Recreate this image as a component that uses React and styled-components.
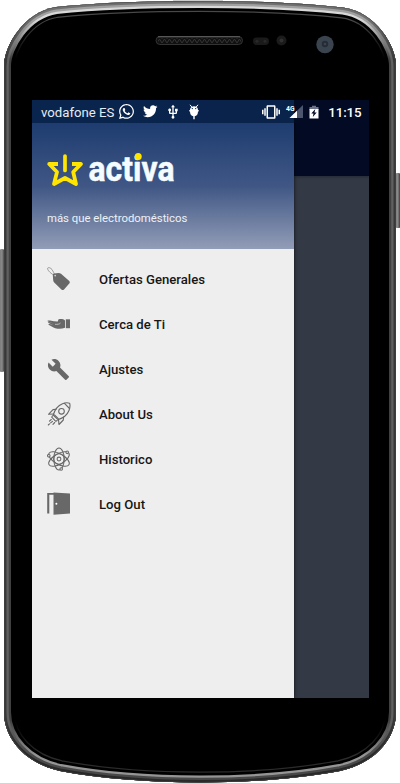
import React from 'react';
import styled, { createGlobalStyle } from 'styled-components';
import { FaWhatsapp, FaTwitter } from 'react-icons/fa';
import { MdUsb, MdBuild, MdVibration } from 'react-icons/md';

const GlobalStyle = createGlobalStyle`
  * { box-sizing: border-box; }
  body { margin: 0; background: #fff; font-family: Roboto, "Liberation Sans", sans-serif; overflow: hidden; }
`;

const Phone = styled.main`
  position: relative;
  width: 400px;
  height: 783px;
  padding: 100px 32px 0;
`;
const FrameArt = styled.svg`
  position: absolute;
  inset: 0;
`;
const Screen = styled.div`
  position: relative;
  width: 336.5px;
  height: 597.5px;
  display: grid;
  grid-template-columns: 262px 1fr;
  background: #333945;
  overflow: hidden;
`;
const Drawer = styled.aside`
  display: flex;
  flex-direction: column;
  background: #eee;
  box-shadow: 0 0 4px rgba(0, 0, 0, 0.7);
  z-index: 1;
`;
const Header = styled.header`
  height: 149px;
  padding: 50px 15px 0;
  background: linear-gradient(#1e3c70 15%, #405785 58%, #929db7);
  color: #fff;
`;
const Brand = styled.svg`
  display: block;
  width: 132px;
  height: 40px;
  overflow: visible;
`;
const Tagline = styled.p`
  margin: 21px 0 0;
  font-size: 11.35px;
  line-height: 15px;
  white-space: nowrap;
  color: #eef1f6;
`;
const Menu = styled.nav`
  display: flex;
  flex-direction: column;
  padding-top: 8px;
`;
const MenuItem = styled.a`
  display: grid;
  grid-template-columns: 52px 1fr;
  align-items: center;
  height: 44.9px;
  padding-left: 15px;
  color: #161616;
  font-size: 13.15px;
  font-weight: 500;
  svg { display: block; color: #686868; }
  span { padding-top: 1px; }
`;
const Backdrop = styled.div`
  display: flex;
  flex-direction: column;
`;
const Toolbar = styled.div`
  height: 75.5px;
  background: #020b23;
  box-shadow: 0 1px 2px #252a34;
`;
const StatusBar = styled.div`
  position: absolute;
  z-index: 2;
  inset: 0 0 auto 0;
  height: 23px;
  display: flex;
  align-items: center;
  padding: 0 7px 0 9px;
  color: #fff;
  background: linear-gradient(90deg, #09254e 0, #09234b 262px, #020b23 262px);
`;
const Carrier = styled.span`
  width: 77px;
  padding-top: 2px;
  font-size: 13.2px;
  line-height: 16px;
  white-space: nowrap;
  color: #e6ebf3;
`;
const IconRow = styled.div`
  display: flex;
  align-items: center;
  gap: ${({ $gap }) => $gap}px;
  margin-left: ${({ $push }) => ($push ? 'auto' : 0)};
  svg { display: block; flex: none; overflow: visible; }
`;
const Clock = styled.time`
  padding-top: 2px;
  margin-left: 9px;
  font-size: 13.3px;
  font-weight: 500;
  line-height: 16px;
  white-space: nowrap;
  letter-spacing: -0.1px;
`;

const OUTLINE =
  'M4 66 C4 46 24 12 56 7 C100 2.500 150 1 200 1 C250 1 300 2.500 343 7.500 C376 12 396 46 396 66 V712 C396 740 373 764 340 771 C300 778.500 250 782.500 200 782.500 C150 782.500 100 778.500 60 771 C27 764 4 740 4 712 Z';

const Shade = ({ id, top, side, bottom }) => (
  <linearGradient id={id} gradientUnits="userSpaceOnUse" x1="0" y1="0" x2="0" y2="783">
    <stop offset="0" stopColor={top} />
    <stop offset="0.025" stopColor={top} />
    <stop offset="0.075" stopColor={side} />
    <stop offset="0.92" stopColor={side} />
    <stop offset="0.965" stopColor={bottom} />
    <stop offset="1" stopColor={bottom} />
  </linearGradient>
);

const PhoneFrame = () => (
  <FrameArt width="400" height="783" viewBox="0 0 400 783" aria-hidden="true">
    <defs>
      <clipPath id="body"><path d={OUTLINE} /></clipPath>
      <Shade id="inner" top="#484848" side="#000" bottom="#2b2b2b" />
      <Shade id="lip" top="#d8d8d8" side="#404040" bottom="#959595" />
      <Shade id="mid" top="#a0a0a0" side="#606060" bottom="#484848" />
      <Shade id="rim" top="#707070" side="#383838" bottom="#292929" />
      <linearGradient id="key"><stop stopColor="#777" /><stop offset="0.5" stopColor="#8a8a8a" /><stop offset="1" stopColor="#292929" /></linearGradient>
      <pattern id="mesh" width="5" height="4" patternUnits="userSpaceOnUse" x="157" y="39">
        <path d="M0 4 L2.500 0 L5 4" fill="none" stroke="#333" />
      </pattern>
    </defs>
    <path d="M173 0 H223 V3 H173 Z" fill="#ccc" />
    <rect x="-1" y="249" width="6" height="123" rx="3" fill="url(#key)" />
    <rect x="395" y="173" width="5.500" height="55" rx="2" fill="url(#key)" />
    <path d={OUTLINE} fill="#000" />
    <g clipPath="url(#body)" fill="none">
      <path d={OUTLINE} stroke="url(#inner)" strokeWidth="22" />
      <path d={OUTLINE} stroke="#000" strokeWidth="19.500" />
      <path d={OUTLINE} stroke="url(#lip)" strokeWidth="14" />
      <path d={OUTLINE} stroke="url(#mid)" strokeWidth="9.500" />
      <path d={OUTLINE} stroke="url(#rim)" strokeWidth="5" />
      <path d={OUTLINE} stroke="#444" strokeWidth="1.200" />
    </g>
    <rect x="156" y="36.500" width="86.500" height="8" rx="4" fill="#111" stroke="#333" />
    <rect x="158" y="38.500" width="83" height="4.500" rx="2" fill="url(#mesh)" />
    <path d="M158 36.800H240" stroke="#666" />
    <rect x="253" y="37.500" width="16" height="7.500" rx="3.700" fill="#1a1a1a" />
    <circle cx="257" cy="41.200" r="1.500" fill="#292929" />
    <circle cx="265" cy="41.200" r="1.500" fill="#292929" />
    <circle cx="281.500" cy="40.500" r="5" fill="#1b1b1b" />
    <circle cx="281.500" cy="40.500" r="2" fill="#303030" />
    <circle cx="325" cy="44.500" r="8.700" fill="#3a444f" />
    <circle cx="325" cy="44" r="3.200" fill="#252c35" />
    <circle cx="325" cy="44" r="1.300" fill="#3b444f" />
  </FrameArt>
);

const DebugIcon = () => (
  <svg width="12" height="16" viewBox="0 0 12 16" fill="#fff">
    <path d="M2 .8 3.800 3 M10 .8 8.200 3" stroke="#fff" strokeWidth="1" />
    <path d="M2 6 C2 1 10 1 10 6 Z" />
    <path d="M1.300 6H10.700V7.500H10C10 10.500 8.500 12 6.700 12.200V15.300H5.300V12.200C3.500 12 2 10.500 2 7.500H1.300Z" />
    <circle cx="4.300" cy="4.600" r=".7" fill="#09254e" /><circle cx="7.700" cy="4.600" r=".7" fill="#09254e" />
  </svg>
);
const SignalIcon = () => (
  <svg width="17" height="15" viewBox="0 0 17 15">
    <path d="M17 1V14H3.500Z" fill="#4b556d" />
    <path d="M11 6.800V14H3.500Z" fill="#fff" />
    <text x="0" y="6.500" fontSize="7" fontWeight="700" fill="#fff" textLength="8.500" lengthAdjust="spacingAndGlyphs">4G</text>
  </svg>
);
const BatteryIcon = () => (
  <svg width="10" height="14" viewBox="0 0 10 14">
    <path d="M.5 2H3V.7H7V2H9.500V5H.5Z" fill="#6c7488" />
    <path d="M.5 4H9.500V13.500H.5Z" fill="#fff" />
    <path d="M6.300 4 2.300 8.500H4.500L3.800 12 7.700 7.500H5.500Z" fill="#020b23" />
  </svg>
);

const TagIcon = () => (
  <svg width="24" height="24" viewBox="0 0 24 24">
    <path d="M7.500 8.500C4.500 7 .5 3.500 .6 1.500 .8 0 3.500 .5 5 2.500 6.300 4.200 7 6.500 8 8.500" fill="none" stroke="#888" strokeWidth=".8" />
    <path d="M7.200 6.500 11.500 6Q13 6 14 6.800L22 13.700Q23.500 15 22.500 16.200L17 22.400Q15.700 23.600 14.400 22.500L7.200 15.500Q6.300 14.500 6.200 13.200L5.800 8Q5.800 6.700 7.200 6.500Z" fill="currentColor" />
    <circle cx="8.200" cy="8.600" r=".9" fill="#ccc" />
  </svg>
);
const HandIcon = () => (
  <svg width="24" height="24" viewBox="0 0 24 24" fill="currentColor">
    <path d="M.5 8.700C2 7.900 4.500 8.800 7 9.300L10 9.600C12 9.300 10.500 8.200 11.500 7.500 13 6.800 16.500 7 18 8.500V15.800C14 17.300 9.500 17 6 15.200L2 13C1 12.300 1.500 11.700 3 12.100L7 13.500 2 11.200C.5 10.400 1 9.800 2.500 10.200L7.500 11.800 1.500 9.700Q.2 9.300 .5 8.700Z" />
    <path d="M18.800 7.300H23V16.200H18.800Z" />
    <path d="M8 12.300C10.500 12.500 12.500 12.200 13.500 11" fill="none" stroke="#eee" strokeWidth=".6" />
  </svg>
);
const RocketIcon = () => (
  <svg width="24" height="24" viewBox="0 0 24 24" fill="none" stroke="currentColor" strokeWidth="1.100" strokeLinecap="round" strokeLinejoin="round">
    <path d="M6.200 13C7.500 8.500 11 3.500 15.500 1.700 18 .7 20.800 .7 22.600 1.200 23.200 3 23 6 22 8.500 20.200 13 15.500 16.300 11 17.600Z" />
    <circle cx="14.500" cy="9.300" r="2.800" />
    <path d="M17.500 1.300 22.500 6.500M9 7.300 6 7.600 1.500 12.300 6.500 12M16.500 15 16.300 18 12 22.500 11.500 17.700M5.500 13.800 4.700 15.200 8.800 19.300 10.200 18.500M7.500 12.800 11.300 16.600" />
    <path d="M4.300 17.500 1.500 20M5.500 19.300 1.300 23M7.700 20.500 5.500 22.800" strokeDasharray="2.500 1.500" />
  </svg>
);
const AtomIcon = () => (
  <svg width="24" height="24" viewBox="0 0 24 24" fill="none" stroke="currentColor" strokeWidth="1.050">
    <ellipse cx="12" cy="12" rx="5.200" ry="11" />
    <ellipse cx="12" cy="12" rx="5.200" ry="11.500" transform="rotate(60 12 12)" />
    <ellipse cx="12" cy="12" rx="5.200" ry="11.500" transform="rotate(-60 12 12)" />
    <circle cx="12" cy="12" r="5.300" />
    <circle cx="12" cy="12" r="1.900" />
    <circle cx="20.200" cy="5.300" r="1.300" fill="#eee" />
    <circle cx="1.800" cy="8.700" r="1.300" fill="#eee" />
    <circle cx="14.200" cy="22" r="1.300" fill="#eee" />
  </svg>
);
const DoorIcon = () => (
  <svg width="24" height="24" viewBox="0 0 24 24">
    <path d="M.2 1H8V2.700H2.300V21.500H.2Z" fill="currentColor" />
    <path d="M6.500 .5 23 1.600V21.600L6.500 22.800Z" fill="currentColor" />
    <circle cx="9.400" cy="11.800" r="1" fill="#fff" />
  </svg>
);

const ITEMS = [
  { label: 'Ofertas Generales', icon: <TagIcon /> },
  { label: 'Cerca de Ti', icon: <HandIcon /> },
  { label: 'Ajustes', icon: <MdBuild size={23} /> },
  { label: 'About Us', icon: <RocketIcon /> },
  { label: 'Historico', icon: <AtomIcon /> },
  { label: 'Log Out', icon: <DoorIcon /> },
];

export default function App() {
  return (
    <>
      <GlobalStyle />
      <Phone>
        <PhoneFrame />
        <Screen>
          <StatusBar>
            <Carrier>vodafone ES</Carrier>
            <IconRow $gap={7.500}>
              <FaWhatsapp size={17} />
              <FaTwitter size={14.500} />
              <MdUsb size={16} />
              <DebugIcon />
            </IconRow>
            <IconRow $gap={6} $push>
              <MdVibration size={18} />
              <SignalIcon />
              <BatteryIcon />
            </IconRow>
            <Clock>11:15</Clock>
          </StatusBar>
          <Drawer>
            <Header>
              <Brand viewBox="0 0 132 40">
                <path d="M11 14H2.200L10 22 7 34 18 28 29 34 26.200 22 34 14H25" fill="none" stroke="#ffe500" strokeWidth="3.800" strokeLinejoin="round" />
                <path d="M18 6V20.500" stroke="#ffe500" strokeWidth="3.700" strokeLinecap="round" />
                <text x="41.500" y="30.500" fontSize="35.500" fontWeight="700" fill="#f5fcff" stroke="#f5fcff" strokeWidth=".5" strokeLinejoin="round" textLength="86" lengthAdjust="spacingAndGlyphs">activa</text>
                <circle cx="91.200" cy="6.500" r="3.500" fill="#ffe500" />
              </Brand>
              <Tagline>más que electrodomésticos</Tagline>
            </Header>
            <Menu>
              {ITEMS.map(({ label, icon }) => (
                <MenuItem key={label}>{icon}<span>{label}</span></MenuItem>
              ))}
            </Menu>
          </Drawer>
          <Backdrop><Toolbar /></Backdrop>
        </Screen>
      </Phone>
    </>
  );
}
